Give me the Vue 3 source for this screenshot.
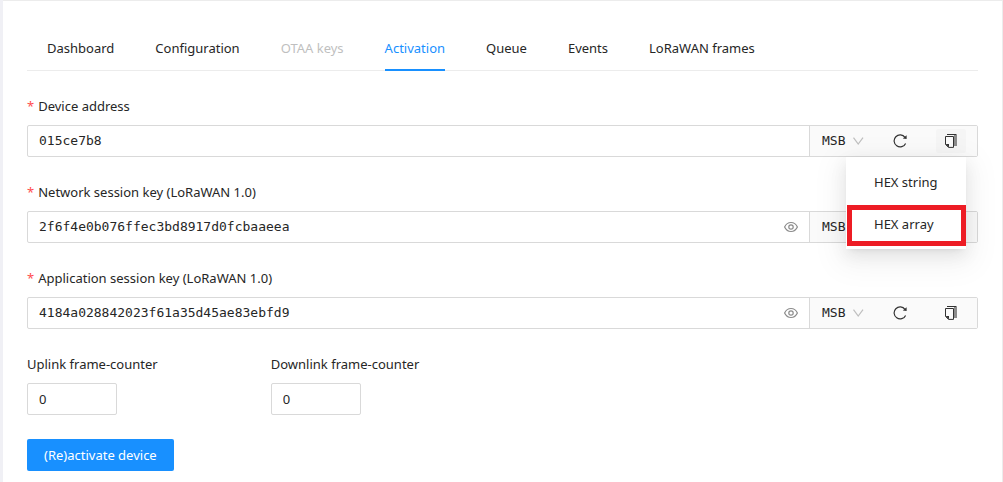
<script setup>
import { ref } from 'vue'

const tabs = ['Dashboard', 'Configuration', 'OTAA keys', 'Activation', 'Queue', 'Events', 'LoRaWAN frames']
const active = ref('Activation')
const fields = ref([
  { id: 'dev-addr', label: 'Device address', value: '015ce7b8', secret: false, open: true },
  { id: 'nwk-key', label: 'Network session key (LoRaWAN 1.0)', value: '2f6f4e0b076ffec3bd8917d0fcbaaeea', secret: true, open: false },
  { id: 'app-key', label: 'Application session key (LoRaWAN 1.0)', value: '4184a028842023f61a35d45ae83ebfd9', secret: true, open: false }
])
const counters = ref([
  { id: 'f-up', label: 'Uplink frame-counter', value: '0' },
  { id: 'f-down', label: 'Downlink frame-counter', value: '0' }
])
</script>

<template>
  <main class="card">
    <nav class="tabs" role="tablist">
      <button
        v-for="t in tabs"
        :key="t"
        class="tab"
        :class="{ active: t === active }"
        type="button"
        role="tab"
        :aria-selected="t === active"
        :disabled="t === 'OTAA keys'"
        @click="active = t"
      >{{ t }}</button>
    </nav>

    <form class="form" @submit.prevent>
      <div v-for="f in fields" :key="f.id" class="field">
        <label class="label required" :for="f.id">{{ f.label }}</label>
        <div class="group">
          <div class="box">
            <input :id="f.id" v-model="f.value" class="key" type="text" spellcheck="false" />
            <button v-if="f.secret" class="eye" type="button" aria-label="Toggle visibility">
              <svg viewBox="0 0 14 14" width="14" height="14" fill="none" stroke="#8c8c8c" stroke-width="1.200">
                <path d="M.6 7C2 4 4.200 2.500 7 2.500S12 4 13.400 7C12 10 9.800 11.500 7 11.500S2 10 .6 7Z" />
                <circle cx="7" cy="7" r="2.200" />
              </svg>
            </button>
          </div>
          <div class="addon">
            <div class="order">
              <select aria-label="Byte order">
                <option>MSB</option>
                <option>LSB</option>
              </select>
              <svg class="chevron" viewBox="0 0 12 8" width="12" height="8" fill="none" stroke="#bfbfbf" stroke-width="1.200">
                <path d="M1.500 .6 6.200 7 11 .6" />
              </svg>
            </div>
            <button class="tool" type="button" aria-label="Generate">
              <svg viewBox="0 0 14 14" width="14" height="14">
                <path d="M12 3.400A6 6 0 1 0 12.600 9.400" fill="none" stroke="#333" stroke-width="1.200" />
                <path d="M13.600 1.300V5L9.800 4.400Z" fill="#333" />
              </svg>
            </button>
            <div class="copy">
              <button class="tool" :class="{ open: f.open }" type="button" aria-label="Copy" @click="f.open = !f.open">
                <svg viewBox="0 0 14 14" width="14" height="14">
                  <path d="M10 1H13V12H10Z" fill="#8c8c8c" />
                  <path d="M3 .5H12.500" fill="none" stroke="#333" />
                  <path d="M1.500 2.500H9.500V13.400H4.500L1.500 10.400Z" fill="#fafafa" stroke="#333" />
                  <path d="M1.500 10H5V13.400Z" fill="#333" />
                </svg>
              </button>
              <div v-if="f.open" class="menu" role="menu">
                <button type="button" role="menuitem">HEX string</button>
                <button type="button" role="menuitem">HEX array</button>
                <span class="marker"></span>
              </div>
            </div>
          </div>
        </div>
      </div>

      <div class="counters">
        <div v-for="c in counters" :key="c.id">
          <label class="label" :for="c.id">{{ c.label }}</label>
          <input :id="c.id" v-model="c.value" class="count" type="text" inputmode="numeric" />
        </div>
      </div>

      <button class="primary" type="submit">(Re)activate device</button>
    </form>
  </main>
</template>

<style>
body {
  background: #f0f0f5;
}
</style>

<style scoped>
.card {
  box-sizing: border-box;
  min-height: 100vh;
  margin-left: 3px;
  padding: 24px 24px 11px;
  border-top: 1px solid #ececec;
  border-right: 1px solid #ececec;
  background: #fff;
  color: #262626;
  font-family: "Noto Sans", "Open Sans", sans-serif;
  font-size: 13px;
  line-height: 22px;
}
button,
input,
select {
  margin: 0;
  padding: 0;
  border: 0;
  background: none;
  color: inherit;
  font: inherit;
  outline: none;
}
button {
  cursor: pointer;
}
svg {
  display: block;
}
.tabs {
  display: flex;
  gap: 41px;
  padding: 0 20px;
  box-shadow: inset 0 -1px #ececec;
}
.tab {
  padding: 12px 0 10px;
  border-bottom: 2px solid transparent;
  white-space: nowrap;
}
.tab.active {
  border-bottom-color: #1890ff;
  color: #1890ff;
}
.tab:disabled {
  color: #bfbfbf;
  cursor: not-allowed;
}
.form {
  display: flex;
  flex-direction: column;
  gap: 24px;
  padding-top: 24px;
}
.label {
  display: block;
  margin-bottom: 8px;
}
.required::before {
  content: "*";
  margin-right: 4px;
  color: #ff4d4f;
}
.group {
  display: flex;
  box-sizing: border-box;
  height: 32px;
  border: 1px solid #d9d9d9;
  border-radius: 2px;
}
.box {
  display: flex;
  flex: 1;
  min-width: 0;
  align-items: center;
  padding: 0 11px;
}
.key {
  flex: 1;
  min-width: 0;
  font-family: "DejaVu Sans Mono", monospace;
}
.addon {
  display: flex;
  align-items: center;
  box-sizing: border-box;
  width: 168px;
  padding: 0 11px 0 12px;
  border-left: 1px solid #d9d9d9;
  background: #fafafa;
}
.order {
  display: grid;
  width: 42px;
  align-items: center;
  margin-right: 21px;
}
.order > * {
  grid-area: 1 / 1;
}
.order select {
  appearance: none;
  width: 100%;
  font-family: "DejaVu Sans Mono", monospace;
}
.chevron {
  justify-self: end;
  pointer-events: none;
}
.tool {
  display: grid;
  place-items: center;
  width: 30px;
  height: 24px;
  border-radius: 2px;
}
.tool.open {
  background: #f5f5f5;
}
.copy {
  position: relative;
  margin-left: auto;
}
.menu {
  position: absolute;
  z-index: 2;
  top: 28px;
  right: 0;
  box-sizing: border-box;
  width: 120px;
  padding: 4px 0;
  background: #fff;
  box-shadow: 0 3px 6px -4px rgba(0, 0, 0, .12), 0 6px 16px rgba(0, 0, 0, .08), 0 9px 28px 8px rgba(0, 0, 0, .05);
}
.menu button {
  display: block;
  width: 100%;
  padding: 10px 28px;
  text-align: left;
  white-space: nowrap;
}
.marker {
  position: absolute;
  inset: 48px 0 3px 1px;
  border: 5px solid #ed1c24;
  pointer-events: none;
}
.counters {
  display: grid;
  grid-template-columns: repeat(4, 1fr);
  gap: 24px;
}
.counters .label {
  white-space: nowrap;
}
.count {
  box-sizing: border-box;
  width: 90px;
  height: 32px;
  padding: 0 11px;
  border: 1px solid #d9d9d9;
  border-radius: 2px;
}
.primary {
  align-self: flex-start;
  height: 32px;
  padding: 0 17px;
  border-radius: 2px;
  background: #1890ff;
  color: #fff;
}
</style>
